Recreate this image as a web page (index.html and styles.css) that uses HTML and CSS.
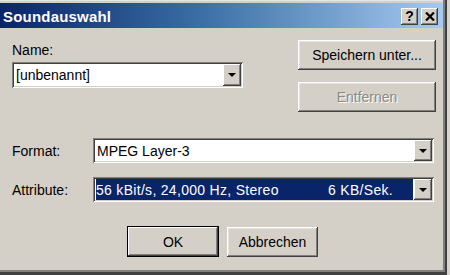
FILE: index.html
```html
<!DOCTYPE html>
<html lang="de">
<head>
<meta charset="utf-8">
<title>Soundauswahl</title>
<link rel="stylesheet" href="styles.css">
</head>
<body>
<div class="window">
  <div class="titlebar">
    <span class="title">Soundauswahl</span>
    <div class="tbtns">
      <span class="tbtn help">?</span>
      <span class="tbtn close"><svg width="10" height="9" viewBox="0 0 10 9"><path d="M1 0.5 L9 8.5 M9 0.5 L1 8.5" stroke="#000" stroke-width="2.2"/></svg></span>
    </div>
  </div>
  <div class="content">
    <div class="top">
      <div class="left-col">
        <div class="label name-label">Name:</div>
        <div class="combo name-combo">
          <span class="value">[unbenannt]</span>
          <span class="dd"><span class="tri"></span></span>
        </div>
      </div>
      <div class="right-col">
        <button class="btn wide">Speichern unter...</button>
        <button class="btn wide disabled">Entfernen</button>
      </div>
    </div>
    <div class="row format-row">
      <div class="label rlabel">Format:</div>
      <div class="combo wide-combo">
        <span class="value">MPEG Layer-3</span>
        <span class="dd"><span class="tri"></span></span>
      </div>
    </div>
    <div class="row attr-row">
      <div class="label rlabel">Attribute:</div>
      <div class="combo wide-combo">
        <span class="value selected"><span class="desc">56 kBit/s, 24,000 Hz, Stereo</span><span class="rate">6 KB/Sek.</span></span>
        <span class="dd"><span class="tri"></span></span>
      </div>
    </div>
    <div class="actions">
      <button class="btn ok">OK</button>
      <button class="btn cancel">Abbrechen</button>
    </div>
  </div>
</div>
</body>
</html>
```
FILE: styles.css
```css
html, body {
  margin: 0;
  padding: 0;
}
body {
  background: #d8d5d0;
  font-family: "Liberation Sans", Arial, sans-serif;
  font-size: 14px;
  color: #000;
}
.window {
  width: 447px;
  height: 275px;
  box-sizing: border-box;
  padding: 3px 2px 0 0;
  background: #d4d0c8;
  border-right: 2px solid #404040;
  border-bottom: 3px solid #404040;
  box-shadow: inset -2px -2px 0 #808080, inset 0 1px 0 #e8e6e1;
}
.titlebar {
  height: 25px;
  display: flex;
  align-items: center;
  justify-content: space-between;
  background: linear-gradient(to right, #0a246a 0%, #3a6ea5 45%, #a6caf0 100%);
  padding: 0 5px 0 3px;
}
.title {
  color: #fff;
  font-weight: bold;
  font-size: 15px;
  letter-spacing: 0.2px;
  padding-top: 1px;
}
.tbtns {
  display: flex;
  gap: 3px;
  padding-top: 2px;
}
.tbtn {
  width: 17px;
  height: 17px;
  box-sizing: border-box;
  display: flex;
  align-items: center;
  justify-content: center;
  background: #d4d0c8;
  box-shadow: inset -1px -1px 0 #404040, inset 1px 1px 0 #fff, inset -2px -2px 0 #808080;
  font-weight: bold;
  font-size: 14px;
  line-height: 1;
}
.help {
  padding-bottom: 1px;
}
.content {
  padding: 12px 0 0 12px;
}
.top {
  display: flex;
}
.left-col {
  width: 231px;
}
.label {
  line-height: 16px;
}
.name-label {
  margin-top: 2px;
  margin-bottom: 4px;
}
.combo {
  display: flex;
  align-items: stretch;
  background: #fff;
  box-sizing: border-box;
  padding: 2px;
  box-shadow: inset 1px 1px 0 #808080, inset -1px -1px 0 #fff, inset 2px 2px 0 #404040, inset -2px -2px 0 #d4d0c8;
}
.name-combo {
  height: 26px;
}
.value {
  flex: 1;
  display: flex;
  align-items: center;
  padding-left: 2px;
  white-space: nowrap;
}
.selected {
  background: #0a246a;
  color: #fff;
  margin: 0 1px 0 1px;
  padding-left: 0;
}
.desc {
  width: 232px;
  letter-spacing: 0.3px;
}
.rate {
  letter-spacing: 0.3px;
}
.dd {
  width: 18px;
  display: flex;
  align-items: center;
  justify-content: center;
  background: #d4d0c8;
  box-shadow: inset -1px -1px 0 #404040, inset 1px 1px 0 #fff, inset -2px -2px 0 #808080;
}
.tri {
  width: 0;
  height: 0;
  border-left: 4px solid transparent;
  border-right: 4px solid transparent;
  border-top: 4px solid #000;
}
.right-col {
  margin-left: 55px;
  display: flex;
  flex-direction: column;
  gap: 12px;
}
.btn {
  font-family: "Liberation Sans", Arial, sans-serif;
  font-size: 14px;
  color: #000;
  background: #d4d0c8;
  border: none;
  padding: 0;
  box-sizing: border-box;
  box-shadow: inset -1px -1px 0 #404040, inset 1px 1px 0 #fff, inset -2px -2px 0 #808080, inset 2px 2px 0 #e6e3de;
}
.wide {
  width: 138px;
  height: 30px;
}
.disabled {
  color: #8c8984;
  text-shadow: 1px 1px 0 #fff;
}
.row {
  display: flex;
  align-items: center;
}
.rlabel {
  width: 81px;
}
.wide-combo {
  width: 341px;
  height: 25px;
}
.format-row {
  margin-top: 26px;
}
.attr-row {
  margin-top: 14px;
}
.actions {
  display: flex;
  align-items: flex-start;
  gap: 8px;
  margin-top: 24px;
  padding-left: 115px;
}
.ok {
  width: 92px;
  height: 31px;
  border: 1px solid #000;
  box-shadow: inset -1px -1px 0 #404040, inset 1px 1px 0 #fff, inset -2px -2px 0 #808080;
}
.cancel {
  width: 91px;
  height: 30px;
  margin-top: 1px;
}
```
